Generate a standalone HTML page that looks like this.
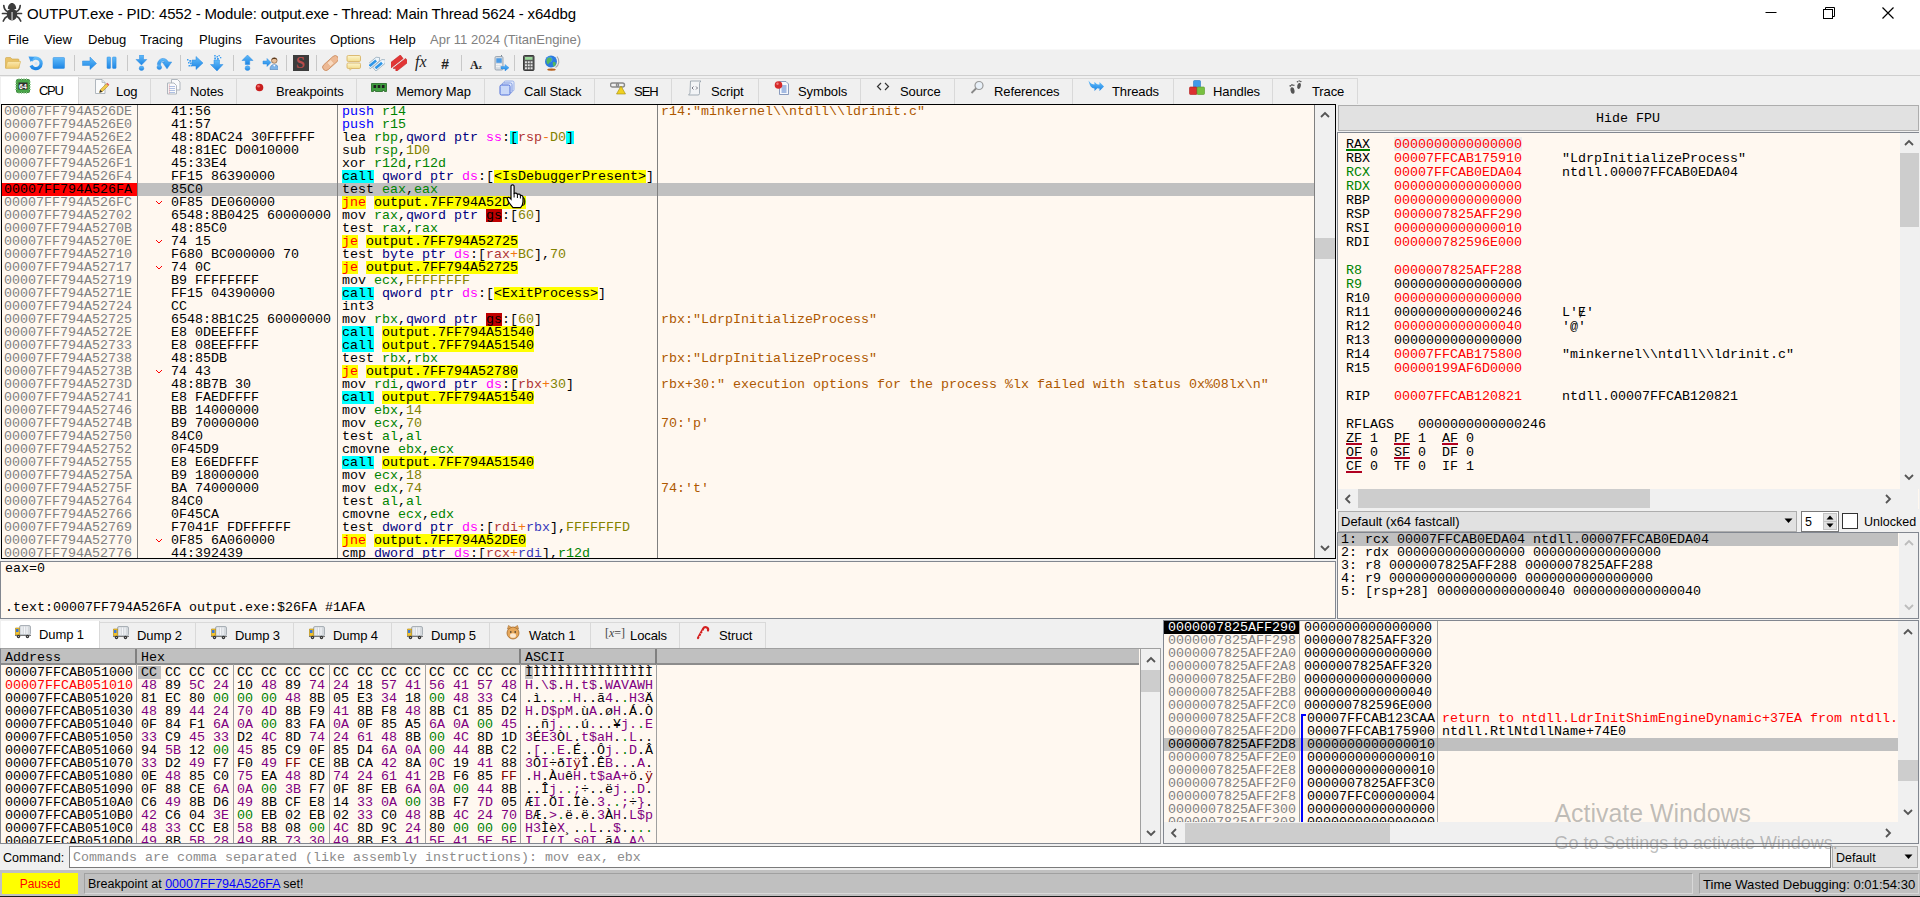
<!DOCTYPE html><html><head><meta charset="utf-8"><title>x64dbg</title><style>*{box-sizing:border-box;margin:0;padding:0}
html,body{width:1920px;height:897px;overflow:hidden;background:#f0f0f0}
body{position:relative;font-family:"Liberation Sans",sans-serif;font-size:13px;color:#000}
.a{position:absolute}
.m{font-family:"Liberation Mono",monospace;font-size:13.33px;line-height:13px;white-space:pre}
.ui{font-family:"Liberation Sans",sans-serif;white-space:pre}
.pan{position:absolute;background:#fff8f0;overflow:hidden}
.row{position:absolute;left:0;height:13px;white-space:pre}
.row i{font-style:normal;position:absolute;top:-0.5px;height:13px}
.row b{font-weight:normal;display:inline-block;height:13px;vertical-align:top}
.g{color:#808080}
.pp{color:#0000ff}.cl{background:#00ffff}.jc{color:#ff0000;background:#ffff00}
.r{color:#008300}.v{color:#828200}.ad{background:#ffff00}
.sz{color:#000080}.sg{color:#ff00ff}.sb{background:#00ffff}
.br{color:#b03434}.ir{color:#3838bc}.op{color:#f27711}.gs{background:#c00000}
.cm{color:#ae5800}
.red{color:#ff0000}.grn{color:#008300}
.p{color:#800080}.z{color:#008000}.f{color:#800000}
.tab{position:absolute;top:78px;height:26px;background:#f0f0f0;border-top:1px solid #d9d9d9;border-right:1px solid #d9d9d9}
.tabt{position:absolute;font-size:13px;line-height:16px;top:84px;white-space:pre;letter-spacing:-0.1px}
.vl{position:absolute;width:1px;background:#808080}
.sb0{position:absolute;background:#f0f0f0}
.th{position:absolute;background:#cdcdcd}
</style></head><body>
<!-- s_top -->
<div class="a" style="left:0;top:0;width:1920px;height:49px;background:#fff"></div><div class="a" style="left:0;top:49px;width:1920px;height:1px;background:#f8f8f8"></div>
<div class="a ui" id="title" style="left:27px;top:4px;font-size:15px;line-height:20px;letter-spacing:-0.17px">OUTPUT.exe - PID: 4552 - Module: output.exe - Thread: Main Thread 5624 - x64dbg</div>
<svg class="a" style="left:0;top:0" width="24" height="24" viewBox="0 0 24 24"><g fill="none" stroke="#3c3c3c" stroke-width="1.700" stroke-linecap="round"><path d="M7.500 11.500C5 10.500 4 8.500 3.800 5.500M16.500 11.500c2.500-1 3.500-3 3.700-6M2.500 13.500h19M7 16.500c-1.800.8-2.800 2.300-3.700 4.500M17 16.500c1.800.8 2.800 2.300 3.700 4.500"/></g><path d="M7.800 9c0-3.500 2-6 4.200-6s4.200 2.500 4.200 6z" fill="#3c3c3c"/><ellipse cx="12" cy="14.500" rx="5.200" ry="6" fill="#3c3c3c"/><rect x="11.400" y="12" width="1.300" height="8" fill="#c8c8c8"/></svg>
<svg class="a" style="left:1750px;top:0" width="170" height="28" viewBox="0 0 170 28"><g stroke="#000" stroke-width="1" fill="none"><path d="M15.500 12.500h11"/><rect x="73.500" y="9.500" width="9" height="9"/><path d="M75.500 9.500v-2h9v9h-2"/><path d="M132.500 7.500l11 11M143.500 7.500l-11 11" stroke-width="1.2"/></g></svg>
<div class="a ui mn" style="left:8px;top:32px;font-size:13px;line-height:16px">File</div>
<div class="a ui mn" style="left:44px;top:32px;font-size:13px;line-height:16px">View</div>
<div class="a ui mn" style="left:88px;top:32px;font-size:13px;line-height:16px">Debug</div>
<div class="a ui mn" style="left:140px;top:32px;font-size:13px;line-height:16px">Tracing</div>
<div class="a ui mn" style="left:199px;top:32px;font-size:13px;line-height:16px">Plugins</div>
<div class="a ui mn" style="left:255px;top:32px;font-size:13px;line-height:16px">Favourites</div>
<div class="a ui mn" style="left:330px;top:32px;font-size:13px;line-height:16px">Options</div>
<div class="a ui mn" style="left:389px;top:32px;font-size:13px;line-height:16px">Help</div>
<div class="a ui" id="build" style="left:430px;top:32px;font-size:13px;line-height:16px;color:#808080">Apr 11 2024 (TitanEngine)</div>
<div class="a" style="left:0;top:50px;width:1920px;height:26px;background:#f0f0f0;border-bottom:1px solid #cfcfcf"></div>
<svg class="a" style="left:0;top:0" width="0" height="0"><defs><linearGradient id="gb" x1="0" y1="0" x2="0" y2="1"><stop offset="0" stop-color="#62bcfa"/><stop offset="1" stop-color="#1c84e4"/></linearGradient><linearGradient id="gf" x1="0" y1="0" x2="0" y2="1"><stop offset="0" stop-color="#fbe9b0"/><stop offset="1" stop-color="#efc96a"/></linearGradient><linearGradient id="gy" x1="0" y1="0" x2="0" y2="1"><stop offset="0" stop-color="#fdf6d0"/><stop offset="1" stop-color="#f2dc8c"/></linearGradient></defs></svg>
<div class="a" style="left:74px;top:55px;width:1px;height:16px;background:#c8c8c8"></div>
<div class="a" style="left:127px;top:55px;width:1px;height:16px;background:#c8c8c8"></div>
<div class="a" style="left:180px;top:55px;width:1px;height:16px;background:#c8c8c8"></div>
<div class="a" style="left:233px;top:55px;width:1px;height:16px;background:#c8c8c8"></div>
<div class="a" style="left:286px;top:55px;width:1px;height:16px;background:#c8c8c8"></div>
<div class="a" style="left:316px;top:55px;width:1px;height:16px;background:#c8c8c8"></div>
<div class="a" style="left:461px;top:55px;width:1px;height:16px;background:#c8c8c8"></div>
<div class="a" style="left:514px;top:55px;width:1px;height:16px;background:#c8c8c8"></div>
<svg class="a" style="left:5px;top:55px" width="16" height="16" viewBox="0 0 16 16"><path d="M0.500 3.500q0-1 1-1h4l1.500 1.500h6q1 0 1 1V13h-13.500z" fill="#e9c267" stroke="#cfa545" stroke-width=".6"/><path d="M0.700 13.300L2.500 6.500h13.200l-2.200 6.800z" fill="url(#gf)" stroke="#d9b356" stroke-width=".6"/></svg>
<svg class="a" style="left:28px;top:55px" width="16" height="16" viewBox="0 0 16 16"><path d="M3.200 5.800A5.300 5.300 0 1 1 3 10.500" fill="none" stroke="url(#gb)" stroke-width="3.200"/><path d="M0.500 1.500l6 .3-3.800 5.200z" fill="#3a9cf0"/><circle cx="8" cy="8.500" r="1.600" fill="#cfe6fb"/></svg>
<svg class="a" style="left:51px;top:55px" width="16" height="16" viewBox="0 0 16 16"><rect x="2" y="2.500" width="11.500" height="11" rx=".8" fill="url(#gb)" stroke="#2b8ae2" stroke-width=".5"/></svg>
<svg class="a" style="left:82px;top:55px" width="16" height="16" viewBox="0 0 16 16"><path d="M0.500 6h7.500V2l6.500 6.500-6.500 6v-4H0.500z" fill="url(#gb)" stroke="#2b8ae2" stroke-width=".5"/></svg>
<svg class="a" style="left:104px;top:55px" width="16" height="16" viewBox="0 0 16 16"><rect x="3" y="2" width="3.600" height="11.500" rx=".8" fill="url(#gb)" stroke="#2b8ae2" stroke-width=".5"/><rect x="8.500" y="2" width="3.600" height="11.500" rx=".8" fill="url(#gb)" stroke="#2b8ae2" stroke-width=".5"/></svg>
<svg class="a" style="left:134px;top:55px" width="16" height="16" viewBox="0 0 16 16"><path d="M5.500 0h4v4.500h3.300L7.500 10 2 4.500h3.500z" fill="url(#gb)" stroke="#2b8ae2" stroke-width=".5"/><circle cx="7.500" cy="13.300" r="2.300" fill="url(#gb)" stroke="#2b8ae2" stroke-width=".5"/></svg>
<svg class="a" style="left:156px;top:55px" width="16" height="16" viewBox="0 0 16 16"><path d="M1.300 9.500C2 3 9 1 12.500 7h3.200l-4.700 6.800L6.300 7h2.500C7 5 4.800 6.500 4.500 9.800z" fill="url(#gb)" stroke="#2b8ae2" stroke-width=".5"/><circle cx="3.300" cy="12.300" r="2.300" fill="url(#gb)" stroke="#2b8ae2" stroke-width=".5"/></svg>
<svg class="a" style="left:187px;top:55px" width="16" height="16" viewBox="0 0 16 16"><path d="M5 5h4V1.500l7 6.500-7 6.500V11H5z" fill="url(#gb)" stroke="#2b8ae2" stroke-width=".5"/><g fill="#3a9cf0"><rect x="0" y="4" width="1.500" height="1.500"/><rect x="2.300" y="5" width="1.800" height="1.800"/><rect x="1" y="7" width="1.500" height="1.500"/><rect x="3" y="7.500" width="1.800" height="1.800"/><rect x="1.500" y="10" width="1.500" height="1.500"/><rect x="3.500" y="10" width="1.500" height="1.500"/></g></svg>
<svg class="a" style="left:209px;top:55px" width="16" height="16" viewBox="0 0 16 16"><path d="M5 5h5.500v4.500h3.500L8 16 1.500 9.500H5z" fill="url(#gb)" stroke="#2b8ae2" stroke-width=".5"/><g fill="#3a9cf0"><rect x="5.200" y="0" width="1.500" height="1.500"/><rect x="7.500" y="1" width="1.500" height="1.500"/><rect x="9.500" y="0" width="1.300" height="1.300"/><rect x="5.200" y="2.500" width="1.800" height="1.800"/><rect x="8" y="3" width="1.800" height="1.800"/><rect x="11" y="2" width="1.300" height="1.300"/></g></svg>
<svg class="a" style="left:240px;top:55px" width="16" height="16" viewBox="0 0 16 16"><path d="M7.500 0l5.500 5.500h-3.300V9.500h-4.400V5.500H2z" fill="url(#gb)" stroke="#2b8ae2" stroke-width=".5"/><circle cx="7.500" cy="13.200" r="2.400" fill="url(#gb)" stroke="#2b8ae2" stroke-width=".5"/></svg>
<svg class="a" style="left:262px;top:55px" width="16" height="16" viewBox="0 0 16 16"><path d="M1 6h4V3.500L9 7.500 5 11.500V9H1z" fill="url(#gb)" stroke="#2b8ae2" stroke-width=".5"/><circle cx="12.300" cy="5.500" r="2.800" fill="#e9c09a" stroke="#6b4a2e" stroke-width=".6"/><path d="M9.400 5a3 3 0 0 1 5.800 0c-1-1.500-4.800-1.500-5.800 0z" fill="#5a3a1e"/><path d="M8 14.500c0-3.500 1.800-5 4.300-5s4.200 1.500 4.200 5z" fill="#7db3e8" stroke="#4a7fb8" stroke-width=".6"/><path d="M11 9.800l1.300 2 1.300-2z" fill="#fff"/></svg>
<div class="a" style="left:293px;top:55px;width:16px;height:16px;background:#3c3c3c"></div><div class="a" style="left:296px;top:54px;font-family:'Liberation Serif',serif;font-size:16px;line-height:17px;font-weight:bold;color:#b84c4c">S</div>
<svg class="a" style="left:322px;top:55px" width="16" height="16" viewBox="0 0 16 16"><g transform="rotate(-42 8.500 8)"><rect x="-1" y="4.800" width="19" height="6.600" rx="3.300" fill="#edb994" stroke="#c98a5e" stroke-width=".8"/><rect x="6" y="5.600" width="5" height="5" fill="#f8d9bf" stroke="#dca37a" stroke-width=".4"/></g></svg>
<svg class="a" style="left:346px;top:55px" width="16" height="16" viewBox="0 0 16 16"><rect x="1" y="0.500" width="13.500" height="6" rx="1.300" fill="url(#gy)" stroke="#d8b468" stroke-width=".9"/><rect x="1" y="8" width="13.500" height="5.500" rx="1.300" fill="url(#gy)" stroke="#d8b468" stroke-width=".9"/><path d="M3.500 13.300l.5 2 2-2z" fill="#f4e096" stroke="#d8b468" stroke-width=".6"/></svg>
<svg class="a" style="left:369px;top:55px" width="16" height="16" viewBox="0 0 16 16"><g transform="rotate(-40 8 8)" stroke="#8fa6b8" stroke-width=".7"><path d="M-1 3h12l2.500 2.500L11 8H-1z" fill="#eef6fc"/><rect x="0.500" y="4.200" width="8.500" height="2.600" fill="#2f96e8" stroke="none"/><path d="M2 8.500h12l2.500 2.500-2.500 2.500H2z" fill="#eef6fc"/><rect x="3.500" y="9.700" width="8.500" height="2.600" fill="#2f96e8" stroke="none"/></g></svg>
<svg class="a" style="left:391px;top:55px" width="16" height="16" viewBox="0 0 16 16"><g transform="rotate(-38 8 8)" fill="#e23636" stroke="#c01c1c" stroke-width=".5"><path d="M-2 2.500h16v4.500H-2l2-2.250z"/><path d="M0 8.500h16V13H0l2-2.250z"/></g></svg>
<div class="a" style="left:415px;top:52px;font-family:'Liberation Serif',serif;font-style:italic;font-size:16px;line-height:20px;color:#222;letter-spacing:0">fx</div>
<div class="a" style="left:441px;top:53.5px;font-family:'Liberation Sans',sans-serif;font-style:italic;font-weight:bold;font-size:14px;line-height:20px;color:#222">#</div>
<div class="a" style="left:470px;top:54.5px;font-family:'Liberation Serif',serif;font-weight:bold;font-size:12px;line-height:20px;color:#222">A<span style="font-size:7px">z</span></div>
<svg class="a" style="left:493px;top:55px" width="16" height="16" viewBox="0 0 16 16"><path d="M8.500 2V0" stroke="#7b8794"/><rect x="2" y="1.500" width="8" height="13.500" rx="1.200" fill="#d5dbe2" stroke="#8b97a4" stroke-width=".8"/><rect x="3.300" y="3.300" width="5.400" height="4.500" fill="#4b9be6"/><g fill="#fff"><rect x="3.300" y="9" width="1.300" height="1.200"/><rect x="5.300" y="9" width="1.300" height="1.200"/><rect x="7.300" y="9" width="1.300" height="1.200"/><rect x="3.300" y="11" width="1.300" height="1.200"/><rect x="5.300" y="11" width="1.300" height="1.200"/></g><path d="M8 11.500h4V9.500l4 3.200-4 3.200v-2H8z" fill="url(#gb)" stroke="#2b8ae2" stroke-width=".4"/></svg>
<svg class="a" style="left:521px;top:55px" width="16" height="16" viewBox="0 0 16 16"><rect x="2.500" y="0.500" width="10.500" height="15" rx="1" fill="#5a5a5a" stroke="#3a3a3a"/><rect x="4" y="2" width="7.500" height="2.800" fill="#9ad89a"/><g fill="#e4e4e4"><rect x="4" y="6.300" width="1.900" height="1.900"/><rect x="6.800" y="6.300" width="1.900" height="1.900"/><rect x="9.600" y="6.300" width="1.900" height="1.900"/><rect x="4" y="9.300" width="1.900" height="1.900"/><rect x="6.800" y="9.300" width="1.900" height="1.900"/><rect x="9.600" y="9.300" width="1.900" height="1.900"/><rect x="4" y="12.300" width="1.900" height="1.900"/><rect x="6.800" y="12.300" width="1.900" height="1.900"/><rect x="9.600" y="12.300" width="1.900" height="1.900"/></g></svg>
<svg class="a" style="left:544px;top:55px" width="16" height="16" viewBox="0 0 16 16"><path d="M13 1.500a7.300 7.300 0 0 1-1.500 11" fill="none" stroke="#aaa" stroke-width="1.100"/><circle cx="7" cy="6.500" r="6" fill="#2a7be0"/><circle cx="5.500" cy="4.500" r="3" fill="#5aa8f4" opacity=".6"/><path d="M3.500 3c2-1.300 4.300-.3 4.200 1.700S5.500 6.500 4.800 8.500 2.300 8 2.500 5.500z M8.800 7.500c1-1 3-.3 3 .9s-.9 3-1.900 3-1.200-2.800-1.100-3.900z" fill="#56b85e"/><ellipse cx="7.500" cy="14.600" rx="4.300" ry="1.200" fill="#b8601c"/></svg>
<div class="a" style="left:1px;top:77px;width:78px;height:27px;background:#fff;border-right:1px solid #d9d9d9"></div>
<div class="tabt" style="left:39px;top:83px;letter-spacing:-1.3px">CPU</div>
<div class="tab" style="left:79px;width:72px"></div>
<div class="tabt" style="left:116px">Log</div>
<div class="tab" style="left:151px;width:86px"></div>
<div class="tabt" style="left:190px">Notes</div>
<div class="tab" style="left:237px;width:120px"></div>
<div class="tabt" style="left:276px">Breakpoints</div>
<div class="tab" style="left:357px;width:128px"></div>
<div class="tabt" style="left:396px">Memory Map</div>
<div class="tab" style="left:485px;width:110px"></div>
<div class="tabt" style="left:524px">Call Stack</div>
<div class="tab" style="left:595px;width:77px"></div>
<div class="tabt" style="left:634px;letter-spacing:-1px">SEH</div>
<div class="tab" style="left:672px;width:87px"></div>
<div class="tabt" style="left:711px">Script</div>
<div class="tab" style="left:759px;width:102px"></div>
<div class="tabt" style="left:798px">Symbols</div>
<div class="tab" style="left:861px;width:94px"></div>
<div class="tabt" style="left:900px">Source</div>
<div class="tab" style="left:955px;width:118px"></div>
<div class="tabt" style="left:994px">References</div>
<div class="tab" style="left:1073px;width:101px"></div>
<div class="tabt" style="left:1112px">Threads</div>
<div class="tab" style="left:1174px;width:99px"></div>
<div class="tabt" style="left:1213px">Handles</div>
<div class="tab" style="left:1273px;width:85px"></div>
<div class="tabt" style="left:1312px">Trace</div>
<svg class="a" style="left:15px;top:78px" width="16" height="16" viewBox="0 0 16 16"><rect x="1.500" y="1.500" width="13" height="13" rx="1" fill="#49a649" stroke="#2f7a2f" stroke-width=".9"/><path d="M4 0v2M6.500 0v2M9 0v2M11.500 0v2M4 14v2M6.500 14v2M9 14v2M11.500 14v2M0 4h2M0 6.500h2M0 9h2M0 11.500h2M14 4h2M14 6.500h2M14 9h2M14 11.500h2" stroke="#8fcf8f" stroke-width=".9"/><rect x="3.500" y="4.500" width="9" height="7" fill="#2e2e2e"/><text x="8" y="10.600" font-family="Liberation Sans,sans-serif" font-size="7" font-weight="bold" fill="#fff" text-anchor="middle">64</text></svg>
<svg class="a" style="left:94px;top:79px" width="16" height="16" viewBox="0 0 16 16"><path d="M1.500 .5h6.500l3 3V14.500H1.500z" fill="#fafbfc" stroke="#a8b0b8" stroke-width=".9"/><path d="M8 .5v3h3" fill="#e4e8ec" stroke="#a8b0b8" stroke-width=".7"/><path d="M5.500 13.500l.8-2.800 6-6 2 2-6 6z" fill="#f2c94c" stroke="#9a7a20" stroke-width=".5"/><path d="M12.300 4.700l1-1 2 2-1 1z" fill="#e05a5a"/><path d="M5.500 13.500l.8-2.800 2 2z" fill="#333"/></svg>
<svg class="a" style="left:166px;top:79px" width="16" height="16" viewBox="0 0 16 16"><path d="M5.500 .5h6l2.500 2.500V11H5.500z" fill="#fafbfc" stroke="#a8b0b8" stroke-width=".9"/><path d="M1.500 4h6.500l2.500 2.500V15H1.500z" fill="#fafbfc" stroke="#a8b0b8" stroke-width=".9"/><path d="M3 7.500h6M3 9.500h6M3 11.500h6M3 13.500h6" stroke="#8ea6d8" stroke-width=".7"/><path d="M3.300 5v10" stroke="#e8a0a0" stroke-width=".6"/></svg>
<svg class="a" style="left:253px;top:80px" width="16" height="16" viewBox="0 0 16 16"><circle cx="6.500" cy="7.500" r="3.800" fill="#c81e1e"/><circle cx="5.500" cy="6.300" r="1.300" fill="#f06a6a"/></svg>
<svg class="a" style="left:371px;top:81px" width="16" height="16" viewBox="0 0 16 16"><path d="M0.500 2.500h15v8h-2v-1h-2v1h-7v-1h-2v1h-2z" fill="#3f9e3f" stroke="#226622" stroke-width=".8"/><rect x="2.500" y="4" width="2.600" height="3" fill="#1e1e1e"/><rect x="6.700" y="4" width="2.600" height="3" fill="#1e1e1e"/><rect x="10.900" y="4" width="2.600" height="3" fill="#1e1e1e"/></svg>
<svg class="a" style="left:499px;top:80px" width="16" height="16" viewBox="0 0 16 16"><rect x="5" y="1" width="10" height="10" rx="1.500" fill="#dfe8fb" stroke="#9ab0e8"/><rect x="3" y="3" width="10" height="10" rx="1.500" fill="#dfe8fb" stroke="#7f98e0"/><rect x="1" y="5" width="10" height="10" rx="1.500" fill="#c9d8f8" stroke="#4f6fd8"/></svg>
<svg class="a" style="left:610px;top:80px" width="16" height="16" viewBox="0 0 16 16"><rect x="0.500" y="3" width="8" height="4" rx="2" fill="none" stroke="#888" stroke-width="1.400"/><rect x="6.500" y="3" width="8" height="4" rx="2" fill="none" stroke="#888" stroke-width="1.400"/><path d="M11 6l4.500 8h-9z" fill="#f0d020" stroke="#a08a10" stroke-width=".6"/></svg>
<svg class="a" style="left:687px;top:80px" width="16" height="16" viewBox="0 0 16 16"><path d="M3.500 1h10.500q-1.500 1-1.500 2.500v10q0 1.500-1.500 1.500H1.500q1.500-1 1.500-2.500z" fill="#f2f4f6" stroke="#98a4ae" stroke-width=".9"/><path d="M6.500 6.500L5 8l1.500 1.500M9 6.500L10.500 8 9 9.500" fill="none" stroke="#556" stroke-width=".8"/></svg>
<svg class="a" style="left:774px;top:80px" width="16" height="16" viewBox="0 0 16 16"><path d="M5.500 1.500h6.500l2.500 2.500v10.500h-9z" fill="#f6f8fc" stroke="#7f92b8" stroke-width=".9"/><path d="M7.500 6h5M7.500 8h5M7.500 10h5M7.500 12h5" stroke="#3f6fc4" stroke-width=".9"/><circle cx="4.500" cy="5" r="3.800" fill="#d62a2a"/><circle cx="3.500" cy="3.800" r="1.200" fill="#f08080"/></svg>
<svg class="a" style="left:876px;top:80px" width="16" height="16" viewBox="0 0 16 16"><path d="M5 3L1.500 6.500 5 10M9 3l3.500 3.500L9 10" fill="none" stroke="#333" stroke-width="1.200"/></svg>
<svg class="a" style="left:970px;top:80px" width="16" height="16" viewBox="0 0 16 16"><circle cx="9" cy="5.500" r="4" fill="#e8f0f8" stroke="#999" stroke-width="1.200"/><path d="M6 8.500L1.500 13" stroke="#888" stroke-width="1.800"/></svg>
<svg class="a" style="left:1088px;top:80px" width="16" height="16" viewBox="0 0 16 16"><path d="M0.500 0.500c2 3 4 4 6 4V2l4.500 4.500-4.500 4.500V8.500c-3 0-5-3-6-8z" fill="url(#gb)"/><path d="M6.500 2c2 2.500 3 2.500 5 2.500V2L16 6.500 11.500 11V8.500c-1.500 0-2.500-.5-3.500-1.500" fill="url(#gb)"/></svg>
<svg class="a" style="left:1189px;top:80px" width="16" height="16" viewBox="0 0 16 16"><rect x="4.500" y="0.500" width="7" height="7" rx="1" fill="#3f9ae8" stroke="#2a78c8" stroke-width=".6"/><rect x="0.500" y="7" width="7.500" height="7.500" rx="1" fill="#dc3030" stroke="#b01c1c" stroke-width=".6"/><rect x="8" y="7" width="7.500" height="7.500" rx="1" fill="#78c040" stroke="#589828" stroke-width=".6"/></svg>
<svg class="a" style="left:1288px;top:80px" width="16" height="16" viewBox="0 0 16 16"><g fill="#555"><ellipse cx="4.500" cy="10.500" rx="2" ry="3.300" transform="rotate(-10 4.500 10.500)"/><circle cx="2.300" cy="5.800" r=".9"/><circle cx="4" cy="5" r=".9"/><circle cx="5.800" cy="5.300" r=".8"/><ellipse cx="11" cy="6" rx="1.800" ry="3" transform="rotate(12 11 6)"/><circle cx="9.500" cy="1.800" r=".8"/><circle cx="11.200" cy="1" r=".8"/><circle cx="12.800" cy="1.500" r=".8"/></g></svg>
<!-- s_disasm -->
<div class="pan" id="dis" style="left:1px;top:104px;width:1335px;height:455px;border:1px solid #000">
<div class="row m" style="top:0px"><i class="g" style="left:2px">00007FF794A526DE</i><i style="left:169px">41:56</i><i style="left:340px"><b class="pp">push</b> <b class="r">r14</b></i><i class="cm" style="left:659px">r14:&quot;minkernel\\ntdll\\ldrinit.c&quot;</i></div>
<div class="row m" style="top:13px"><i class="g" style="left:2px">00007FF794A526E0</i><i style="left:169px">41:57</i><i style="left:340px"><b class="pp">push</b> <b class="r">r15</b></i></div>
<div class="row m" style="top:26px"><i class="g" style="left:2px">00007FF794A526E2</i><i style="left:169px">48:8DAC24 30FFFFFF</i><i style="left:340px">lea <b class="r">rbp</b>,<b class="sz">qword ptr</b> <b class="sg">ss</b>:<b class="sb">[</b><b class="br">rsp</b><b class="op">-</b><b class="v">D0</b><b class="sb">]</b></i></div>
<div class="row m" style="top:39px"><i class="g" style="left:2px">00007FF794A526EA</i><i style="left:169px">48:81EC D0010000</i><i style="left:340px">sub <b class="r">rsp</b>,<b class="v">1D0</b></i></div>
<div class="row m" style="top:52px"><i class="g" style="left:2px">00007FF794A526F1</i><i style="left:169px">45:33E4</i><i style="left:340px">xor <b class="r">r12d</b>,<b class="r">r12d</b></i></div>
<div class="row m" style="top:65px"><i class="g" style="left:2px">00007FF794A526F4</i><i style="left:169px">FF15 86390000</i><i style="left:340px"><b class="cl">call</b> <b class="sz">qword ptr</b> <b class="sg">ds</b>:[<b class="ad">&lt;IsDebuggerPresent&gt;</b>]</i></div>
<div class="a" style="left:0;top:78px;width:135px;height:13px;background:#ff0000"></div>
<div class="a" style="left:136px;top:78px;width:1176px;height:13px;background:#c0c0c0"></div>
<div class="row m" style="top:78px"><i class="" style="left:2px">00007FF794A526FA</i><i style="left:169px">85C0</i><i style="left:340px">test <b class="r">eax</b>,<b class="r">eax</b></i></div>
<div class="row m" style="top:91px"><i class="g" style="left:2px">00007FF794A526FC</i><i style="left:169px">0F85 DE060000</i><i style="left:340px"><b class="jc">jne</b> <b class="ad">output.7FF794A52DE0</b></i></div>
<svg class="a" style="left:153px;top:95px" width="8" height="6" viewBox="0 0 8 6"><path d="M1 1l3 3 3-3" fill="none" stroke="#ff0000" stroke-width="1"/></svg>
<div class="row m" style="top:104px"><i class="g" style="left:2px">00007FF794A52702</i><i style="left:169px">6548:8B0425 60000000</i><i style="left:340px">mov <b class="r">rax</b>,<b class="sz">qword ptr</b> <b class="gs">gs</b>:[<b class="v">60</b>]</i></div>
<div class="row m" style="top:117px"><i class="g" style="left:2px">00007FF794A5270B</i><i style="left:169px">48:85C0</i><i style="left:340px">test <b class="r">rax</b>,<b class="r">rax</b></i></div>
<div class="row m" style="top:130px"><i class="g" style="left:2px">00007FF794A5270E</i><i style="left:169px">74 15</i><i style="left:340px"><b class="jc">je</b> <b class="ad">output.7FF794A52725</b></i></div>
<svg class="a" style="left:153px;top:134px" width="8" height="6" viewBox="0 0 8 6"><path d="M1 1l3 3 3-3" fill="none" stroke="#ff0000" stroke-width="1"/></svg>
<div class="row m" style="top:143px"><i class="g" style="left:2px">00007FF794A52710</i><i style="left:169px">F680 BC000000 70</i><i style="left:340px">test <b class="sz">byte ptr</b> <b class="sg">ds</b>:[<b class="br">rax</b><b class="op">+</b><b class="v">BC</b>],<b class="v">70</b></i></div>
<div class="row m" style="top:156px"><i class="g" style="left:2px">00007FF794A52717</i><i style="left:169px">74 0C</i><i style="left:340px"><b class="jc">je</b> <b class="ad">output.7FF794A52725</b></i></div>
<svg class="a" style="left:153px;top:160px" width="8" height="6" viewBox="0 0 8 6"><path d="M1 1l3 3 3-3" fill="none" stroke="#ff0000" stroke-width="1"/></svg>
<div class="row m" style="top:169px"><i class="g" style="left:2px">00007FF794A52719</i><i style="left:169px">B9 FFFFFFFF</i><i style="left:340px">mov <b class="r">ecx</b>,<b class="v">FFFFFFFF</b></i></div>
<div class="row m" style="top:182px"><i class="g" style="left:2px">00007FF794A5271E</i><i style="left:169px">FF15 04390000</i><i style="left:340px"><b class="cl">call</b> <b class="sz">qword ptr</b> <b class="sg">ds</b>:[<b class="ad">&lt;ExitProcess&gt;</b>]</i></div>
<div class="row m" style="top:195px"><i class="g" style="left:2px">00007FF794A52724</i><i style="left:169px">CC</i><i style="left:340px">int3</i></div>
<div class="row m" style="top:208px"><i class="g" style="left:2px">00007FF794A52725</i><i style="left:169px">6548:8B1C25 60000000</i><i style="left:340px">mov <b class="r">rbx</b>,<b class="sz">qword ptr</b> <b class="gs">gs</b>:[<b class="v">60</b>]</i><i class="cm" style="left:659px">rbx:&quot;LdrpInitializeProcess&quot;</i></div>
<div class="row m" style="top:221px"><i class="g" style="left:2px">00007FF794A5272E</i><i style="left:169px">E8 0DEEFFFF</i><i style="left:340px"><b class="cl">call</b> <b class="ad">output.7FF794A51540</b></i></div>
<div class="row m" style="top:234px"><i class="g" style="left:2px">00007FF794A52733</i><i style="left:169px">E8 08EEFFFF</i><i style="left:340px"><b class="cl">call</b> <b class="ad">output.7FF794A51540</b></i></div>
<div class="row m" style="top:247px"><i class="g" style="left:2px">00007FF794A52738</i><i style="left:169px">48:85DB</i><i style="left:340px">test <b class="r">rbx</b>,<b class="r">rbx</b></i><i class="cm" style="left:659px">rbx:&quot;LdrpInitializeProcess&quot;</i></div>
<div class="row m" style="top:260px"><i class="g" style="left:2px">00007FF794A5273B</i><i style="left:169px">74 43</i><i style="left:340px"><b class="jc">je</b> <b class="ad">output.7FF794A52780</b></i></div>
<svg class="a" style="left:153px;top:264px" width="8" height="6" viewBox="0 0 8 6"><path d="M1 1l3 3 3-3" fill="none" stroke="#ff0000" stroke-width="1"/></svg>
<div class="row m" style="top:273px"><i class="g" style="left:2px">00007FF794A5273D</i><i style="left:169px">48:8B7B 30</i><i style="left:340px">mov <b class="r">rdi</b>,<b class="sz">qword ptr</b> <b class="sg">ds</b>:[<b class="br">rbx</b><b class="op">+</b><b class="v">30</b>]</i><i class="cm" style="left:659px">rbx+30:&quot; execution options for the process %lx failed with status 0x%08lx\n&quot;</i></div>
<div class="row m" style="top:286px"><i class="g" style="left:2px">00007FF794A52741</i><i style="left:169px">E8 FAEDFFFF</i><i style="left:340px"><b class="cl">call</b> <b class="ad">output.7FF794A51540</b></i></div>
<div class="row m" style="top:299px"><i class="g" style="left:2px">00007FF794A52746</i><i style="left:169px">BB 14000000</i><i style="left:340px">mov <b class="r">ebx</b>,<b class="v">14</b></i></div>
<div class="row m" style="top:312px"><i class="g" style="left:2px">00007FF794A5274B</i><i style="left:169px">B9 70000000</i><i style="left:340px">mov <b class="r">ecx</b>,<b class="v">70</b></i><i class="cm" style="left:659px">70:&#x27;p&#x27;</i></div>
<div class="row m" style="top:325px"><i class="g" style="left:2px">00007FF794A52750</i><i style="left:169px">84C0</i><i style="left:340px">test <b class="r">al</b>,<b class="r">al</b></i></div>
<div class="row m" style="top:338px"><i class="g" style="left:2px">00007FF794A52752</i><i style="left:169px">0F45D9</i><i style="left:340px">cmovne <b class="r">ebx</b>,<b class="r">ecx</b></i></div>
<div class="row m" style="top:351px"><i class="g" style="left:2px">00007FF794A52755</i><i style="left:169px">E8 E6EDFFFF</i><i style="left:340px"><b class="cl">call</b> <b class="ad">output.7FF794A51540</b></i></div>
<div class="row m" style="top:364px"><i class="g" style="left:2px">00007FF794A5275A</i><i style="left:169px">B9 18000000</i><i style="left:340px">mov <b class="r">ecx</b>,<b class="v">18</b></i></div>
<div class="row m" style="top:377px"><i class="g" style="left:2px">00007FF794A5275F</i><i style="left:169px">BA 74000000</i><i style="left:340px">mov <b class="r">edx</b>,<b class="v">74</b></i><i class="cm" style="left:659px">74:&#x27;t&#x27;</i></div>
<div class="row m" style="top:390px"><i class="g" style="left:2px">00007FF794A52764</i><i style="left:169px">84C0</i><i style="left:340px">test <b class="r">al</b>,<b class="r">al</b></i></div>
<div class="row m" style="top:403px"><i class="g" style="left:2px">00007FF794A52766</i><i style="left:169px">0F45CA</i><i style="left:340px">cmovne <b class="r">ecx</b>,<b class="r">edx</b></i></div>
<div class="row m" style="top:416px"><i class="g" style="left:2px">00007FF794A52769</i><i style="left:169px">F7041F FDFFFFFF</i><i style="left:340px">test <b class="sz">dword ptr</b> <b class="sg">ds</b>:[<b class="br">rdi</b><b class="op">+</b><b class="ir">rbx</b>],<b class="v">FFFFFFFD</b></i></div>
<div class="row m" style="top:429px"><i class="g" style="left:2px">00007FF794A52770</i><i style="left:169px">0F85 6A060000</i><i style="left:340px"><b class="jc">jne</b> <b class="ad">output.7FF794A52DE0</b></i></div>
<svg class="a" style="left:153px;top:433px" width="8" height="6" viewBox="0 0 8 6"><path d="M1 1l3 3 3-3" fill="none" stroke="#ff0000" stroke-width="1"/></svg>
<div class="row m" style="top:442px"><i class="g" style="left:2px">00007FF794A52776</i><i style="left:169px">44:392439</i><i style="left:340px">cmp <b class="sz">dword ptr</b> <b class="sg">ds</b>:[<b class="br">rcx</b><b class="op">+</b><b class="ir">rdi</b>],<b class="r">r12d</b></i></div>
<div class="vl" style="left:135px;top:0;height:453px"></div>
<div class="vl" style="left:335px;top:0;height:453px"></div>
<div class="vl" style="left:655px;top:0;height:453px"></div>
<div class="sb0" style="left:1312px;top:0;width:21px;height:453px;border-left:1px solid #808080"></div>
<svg class="a" style="left:1318px;top:6px" width="10" height="8" viewBox="0 0 10 8"><path d="M1 6l4-4 4 4" fill="none" stroke="#555" stroke-width="1.800"/></svg>
<svg class="a" style="left:1318px;top:439px" width="10" height="8" viewBox="0 0 10 8"><path d="M1 2l4 4 4-4" fill="none" stroke="#555" stroke-width="1.800"/></svg>
<div class="th" style="left:1313px;top:133px;width:20px;height:21px"></div>
</div>
<svg class="a" style="left:506px;top:184px" width="19" height="25" viewBox="0 0 19 25"><path d="M5.500 1.200c1.200-.8 2.600 0 2.600 1.300v7l1.200-.3c1-.2 1.900.3 2.100 1.100l1-.2c1-.2 1.900.4 2 1.300l.8-.1c1.100 0 1.800.8 1.800 1.900v4.500c0 2.500-1.200 4.500-2.400 6H7c-2.500-3-5-6-5.600-8.700-.4-1.300 1-2.300 2.200-1.300l1.400 1.500V2.500c0-.5.200-1 .5-1.300z" fill="#fff" stroke="#000" stroke-width="1.200"/><path d="M8.100 9.500v4M11.400 10.500v3.500M14.400 11.500v3" stroke="#000" stroke-width="1"/></svg>
<div class="pan" id="info" style="left:0;top:561px;width:1336px;height:58px;border:1px solid #828790">
<div class="row m" style="top:0"><i style="left:4px">eax=0</i></div>
<div class="row m" style="top:39px"><i style="left:4px">.text:00007FF794A526FA output.exe:$26FA #1AFA</i></div>
</div>
<!-- s_regs -->
<div class="a" style="left:1338px;top:105px;width:581px;height:26px;background:#e1e1e1;border:1px solid #adadad"></div>
<div class="a m" style="left:1596px;top:111.500px">Hide FPU</div>
<div class="pan" id="regs" style="left:1337px;top:132px;width:582px;height:377px;border-left:1px solid #828790;border-top:1px solid #828790">
<div class="a" style="left:56px;top:4px;width:128px;height:14px;background:#eeeeee"></div>
<div class="a" style="left:8px;top:16px;width:24px;height:2px;background:#008000"></div>
<div class="row m" style="top:4px"><i class="" style="left:8px;top:1px">RAX</i><i class="red" style="left:56px;top:1px">0000000000000000</i></div>
<div class="row m" style="top:18px"><i class="" style="left:8px;top:1px">RBX</i><i class="red" style="left:56px;top:1px">00007FFCAB175910</i><i style="left:224px;top:1px">&quot;LdrpInitializeProcess&quot;</i></div>
<div class="row m" style="top:32px"><i class="grn" style="left:8px;top:1px">RCX</i><i class="red" style="left:56px;top:1px">00007FFCAB0EDA04</i><i style="left:224px;top:1px">ntdll.00007FFCAB0EDA04</i></div>
<div class="row m" style="top:46px"><i class="grn" style="left:8px;top:1px">RDX</i><i class="red" style="left:56px;top:1px">0000000000000000</i></div>
<div class="row m" style="top:60px"><i class="" style="left:8px;top:1px">RBP</i><i class="red" style="left:56px;top:1px">0000000000000000</i></div>
<div class="row m" style="top:74px"><i class="" style="left:8px;top:1px">RSP</i><i class="red" style="left:56px;top:1px">0000007825AFF290</i></div>
<div class="row m" style="top:88px"><i class="" style="left:8px;top:1px">RSI</i><i class="red" style="left:56px;top:1px">0000000000000010</i></div>
<div class="row m" style="top:102px"><i class="" style="left:8px;top:1px">RDI</i><i class="red" style="left:56px;top:1px">000000782596E000</i></div>
<div class="row m" style="top:130px"><i class="grn" style="left:8px;top:1px">R8</i><i class="red" style="left:56px;top:1px">0000007825AFF288</i></div>
<div class="row m" style="top:144px"><i class="grn" style="left:8px;top:1px">R9</i><i class="" style="left:56px;top:1px">0000000000000000</i></div>
<div class="row m" style="top:158px"><i class="" style="left:8px;top:1px">R10</i><i class="red" style="left:56px;top:1px">0000000000000000</i></div>
<div class="row m" style="top:172px"><i class="" style="left:8px;top:1px">R11</i><i class="" style="left:56px;top:1px">0000000000000246</i><i style="left:224px;top:1px">L&#x27;Ɇ&#x27;</i></div>
<div class="row m" style="top:186px"><i class="" style="left:8px;top:1px">R12</i><i class="red" style="left:56px;top:1px">0000000000000040</i><i style="left:224px;top:1px">&#x27;@&#x27;</i></div>
<div class="row m" style="top:200px"><i class="" style="left:8px;top:1px">R13</i><i class="" style="left:56px;top:1px">0000000000000000</i></div>
<div class="row m" style="top:214px"><i class="" style="left:8px;top:1px">R14</i><i class="red" style="left:56px;top:1px">00007FFCAB175800</i><i style="left:224px;top:1px">&quot;minkernel\\ntdll\\ldrinit.c&quot;</i></div>
<div class="row m" style="top:228px"><i class="" style="left:8px;top:1px">R15</i><i class="red" style="left:56px;top:1px">00000199AF6D0000</i></div>
<div class="row m" style="top:256px"><i class="" style="left:8px;top:1px">RIP</i><i class="red" style="left:56px;top:1px">00007FFCAB120821</i><i style="left:224px;top:1px">ntdll.00007FFCAB120821</i></div>
<div class="row m" style="top:284px"><i style="left:8px;top:1px">RFLAGS</i><i style="left:80px;top:1px">0000000000000246</i></div>
<div class="a" style="left:8px;top:310px;width:16px;height:2px;background:#b00020"></div>
<div class="a" style="left:56px;top:310px;width:16px;height:2px;background:#b00020"></div>
<div class="a" style="left:104px;top:310px;width:16px;height:2px;background:#b00020"></div>
<div class="row m" style="top:298px"><i style="left:8px;top:1px">ZF</i><i style="left:32px;top:1px">1</i><i style="left:56px;top:1px">PF</i><i style="left:80px;top:1px">1</i><i style="left:104px;top:1px">AF</i><i style="left:128px;top:1px">0</i></div>
<div class="a" style="left:8px;top:324px;width:16px;height:2px;background:#b00020"></div>
<div class="a" style="left:56px;top:324px;width:16px;height:2px;background:#b00020"></div>
<div class="row m" style="top:312px"><i style="left:8px;top:1px">OF</i><i style="left:32px;top:1px">0</i><i style="left:56px;top:1px">SF</i><i style="left:80px;top:1px">0</i><i style="left:104px;top:1px">DF</i><i style="left:128px;top:1px">0</i></div>
<div class="a" style="left:8px;top:338px;width:16px;height:2px;background:#b00020"></div>
<div class="row m" style="top:326px"><i style="left:8px;top:1px">CF</i><i style="left:32px;top:1px">0</i><i style="left:56px;top:1px">TF</i><i style="left:80px;top:1px">0</i><i style="left:104px;top:1px">IF</i><i style="left:128px;top:1px">1</i></div>
<div class="sb0" style="left:562px;top:0;width:19px;height:356px"></div>
<svg class="a" style="left:566px;top:6px" width="10" height="8" viewBox="0 0 10 8"><path d="M1 6l4-4 4 4" fill="none" stroke="#555" stroke-width="1.800"/></svg>
<svg class="a" style="left:566px;top:340px" width="10" height="8" viewBox="0 0 10 8"><path d="M1 2l4 4 4-4" fill="none" stroke="#555" stroke-width="1.800"/></svg>
<div class="th" style="left:562px;top:20px;width:19px;height:74px"></div>
<div class="sb0" style="left:0;top:356px;width:580px;height:20px"></div>
<svg class="a" style="left:6px;top:361px" width="8" height="10" viewBox="0 0 8 10"><path d="M6 1L2 5l4 4" fill="none" stroke="#555" stroke-width="1.800"/></svg>
<svg class="a" style="left:546px;top:361px" width="8" height="10" viewBox="0 0 8 10"><path d="M2 1l4 4-4 4" fill="none" stroke="#555" stroke-width="1.800"/></svg>
<div class="th" style="left:20px;top:356px;width:292px;height:19px"></div>
</div>
<div class="a" style="left:1338px;top:511px;width:459px;height:21px;background:#e1e1e1;border:1px solid #adadad"></div>
<div class="a ui" id="cc" style="left:1341px;top:514px;font-size:13px;line-height:15px">Default (x64 fastcall)</div>
<svg class="a" style="left:1784px;top:518px" width="9" height="6" viewBox="0 0 9 6"><path d="M0.500 0.500h8L4.500 5z" fill="#000"/></svg>
<div class="a" style="left:1801px;top:511px;width:38px;height:21px;background:#fff;border:1px solid #7a7a7a"></div>
<div class="a ui" style="left:1805px;top:515px;font-size:12.500px;line-height:15px">5</div>
<div class="a" style="left:1823px;top:513px;width:14px;height:17px;background:#e1e1e1;border:1px solid #c4c4c4"></div>
<div class="a" style="left:1824px;top:521px;width:12px;height:1px;background:#c4c4c4"></div>
<svg class="a" style="left:1825px;top:513px" width="10" height="17" viewBox="0 0 10 17"><path d="M1.500 6.500l3.500-4 3.500 4zM1.500 10.500l3.500 4 3.500-4z" fill="#000"/></svg>
<div class="a" style="left:1842px;top:513px;width:16px;height:16px;background:#fff;border:1px solid #333"></div>
<div class="a ui" id="unl" style="left:1864px;top:515px;font-size:12.500px;line-height:15px">Unlocked</div>
<div class="pan" id="args" style="left:1337px;top:532px;width:582px;height:87px;border:1px solid #828790">
<div class="a" style="left:0;top:0;width:560px;height:13px;background:#c0c0c0"></div>
<div class="row m" style="top:0px"><i style="left:3px">1: rcx 00007FFCAB0EDA04 ntdll.00007FFCAB0EDA04</i></div>
<div class="row m" style="top:13px"><i style="left:3px">2: rdx 0000000000000000 0000000000000000</i></div>
<div class="row m" style="top:26px"><i style="left:3px">3: r8 0000007825AFF288 0000007825AFF288</i></div>
<div class="row m" style="top:39px"><i style="left:3px">4: r9 0000000000000000 0000000000000000</i></div>
<div class="row m" style="top:52px"><i style="left:3px">5: [rsp+28] 0000000000000040 0000000000000040</i></div>
<div class="sb0" style="left:561px;top:0;width:19px;height:85px"></div>
<svg class="a" style="left:566px;top:6px" width="10" height="8" viewBox="0 0 10 8"><path d="M1 6l4-4 4 4" fill="none" stroke="#bcbcbc" stroke-width="1.800"/></svg>
<svg class="a" style="left:566px;top:70px" width="10" height="8" viewBox="0 0 10 8"><path d="M1 2l4 4 4-4" fill="none" stroke="#bcbcbc" stroke-width="1.800"/></svg>
</div>
<!-- s_dump -->
<div class="a" style="left:1px;top:621px;width:99px;height:28px;background:#fff;border-right:1px solid #d9d9d9"></div>
<div class="tabt" style="left:39px;top:626.5px">Dump 1</div>
<svg class="a" style="left:15px;top:625px" width="16" height="16" viewBox="0 0 16 16"><rect x="4.500" y="0.500" width="11" height="9.500" rx="1.500" fill="#d5d9dd" stroke="#9aa2aa" stroke-width=".8"/><path d="M7 1.500v7.500M9.500 1.500v7.500M12 1.500v7.500" stroke="#f4f6f8" stroke-width="1.200"/><path d="M0.500 3h4v7h-4z" fill="#f2c230" stroke="#b8901c" stroke-width=".7"/><rect x="1" y="4" width="2.500" height="3" fill="#3b78d8"/><path d="M0 10.500h16" stroke="#777" stroke-width="1"/><circle cx="3.500" cy="11.500" r="1.700" fill="#333"/><circle cx="12.500" cy="11.500" r="1.700" fill="#333"/><circle cx="3.500" cy="11.500" r=".6" fill="#ccc"/><circle cx="12.500" cy="11.500" r=".6" fill="#ccc"/></svg>
<div class="tab" style="left:100px;top:622px;width:96px;height:26px"></div>
<div class="tabt" style="left:137px;top:627.5px">Dump 2</div>
<svg class="a" style="left:113px;top:626px" width="16" height="16" viewBox="0 0 16 16"><rect x="4.500" y="0.500" width="11" height="9.500" rx="1.500" fill="#d5d9dd" stroke="#9aa2aa" stroke-width=".8"/><path d="M7 1.500v7.500M9.500 1.500v7.500M12 1.500v7.500" stroke="#f4f6f8" stroke-width="1.200"/><path d="M0.500 3h4v7h-4z" fill="#f2c230" stroke="#b8901c" stroke-width=".7"/><rect x="1" y="4" width="2.500" height="3" fill="#3b78d8"/><path d="M0 10.500h16" stroke="#777" stroke-width="1"/><circle cx="3.500" cy="11.500" r="1.700" fill="#333"/><circle cx="12.500" cy="11.500" r="1.700" fill="#333"/><circle cx="3.500" cy="11.500" r=".6" fill="#ccc"/><circle cx="12.500" cy="11.500" r=".6" fill="#ccc"/></svg>
<div class="tab" style="left:196px;top:622px;width:98px;height:26px"></div>
<div class="tabt" style="left:235px;top:627.5px">Dump 3</div>
<svg class="a" style="left:211px;top:626px" width="16" height="16" viewBox="0 0 16 16"><rect x="4.500" y="0.500" width="11" height="9.500" rx="1.500" fill="#d5d9dd" stroke="#9aa2aa" stroke-width=".8"/><path d="M7 1.500v7.500M9.500 1.500v7.500M12 1.500v7.500" stroke="#f4f6f8" stroke-width="1.200"/><path d="M0.500 3h4v7h-4z" fill="#f2c230" stroke="#b8901c" stroke-width=".7"/><rect x="1" y="4" width="2.500" height="3" fill="#3b78d8"/><path d="M0 10.500h16" stroke="#777" stroke-width="1"/><circle cx="3.500" cy="11.500" r="1.700" fill="#333"/><circle cx="12.500" cy="11.500" r="1.700" fill="#333"/><circle cx="3.500" cy="11.500" r=".6" fill="#ccc"/><circle cx="12.500" cy="11.500" r=".6" fill="#ccc"/></svg>
<div class="tab" style="left:294px;top:622px;width:98px;height:26px"></div>
<div class="tabt" style="left:333px;top:627.5px">Dump 4</div>
<svg class="a" style="left:309px;top:626px" width="16" height="16" viewBox="0 0 16 16"><rect x="4.500" y="0.500" width="11" height="9.500" rx="1.500" fill="#d5d9dd" stroke="#9aa2aa" stroke-width=".8"/><path d="M7 1.500v7.500M9.500 1.500v7.500M12 1.500v7.500" stroke="#f4f6f8" stroke-width="1.200"/><path d="M0.500 3h4v7h-4z" fill="#f2c230" stroke="#b8901c" stroke-width=".7"/><rect x="1" y="4" width="2.500" height="3" fill="#3b78d8"/><path d="M0 10.500h16" stroke="#777" stroke-width="1"/><circle cx="3.500" cy="11.500" r="1.700" fill="#333"/><circle cx="12.500" cy="11.500" r="1.700" fill="#333"/><circle cx="3.500" cy="11.500" r=".6" fill="#ccc"/><circle cx="12.500" cy="11.500" r=".6" fill="#ccc"/></svg>
<div class="tab" style="left:392px;top:622px;width:98px;height:26px"></div>
<div class="tabt" style="left:431px;top:627.5px">Dump 5</div>
<svg class="a" style="left:407px;top:626px" width="16" height="16" viewBox="0 0 16 16"><rect x="4.500" y="0.500" width="11" height="9.500" rx="1.500" fill="#d5d9dd" stroke="#9aa2aa" stroke-width=".8"/><path d="M7 1.500v7.500M9.500 1.500v7.500M12 1.500v7.500" stroke="#f4f6f8" stroke-width="1.200"/><path d="M0.500 3h4v7h-4z" fill="#f2c230" stroke="#b8901c" stroke-width=".7"/><rect x="1" y="4" width="2.500" height="3" fill="#3b78d8"/><path d="M0 10.500h16" stroke="#777" stroke-width="1"/><circle cx="3.500" cy="11.500" r="1.700" fill="#333"/><circle cx="12.500" cy="11.500" r="1.700" fill="#333"/><circle cx="3.500" cy="11.500" r=".6" fill="#ccc"/><circle cx="12.500" cy="11.500" r=".6" fill="#ccc"/></svg>
<div class="tab" style="left:490px;top:622px;width:101px;height:26px"></div>
<div class="tabt" style="left:529px;top:627.5px">Watch 1</div>
<div class="tab" style="left:591px;top:622px;width:89px;height:26px"></div>
<div class="tabt" style="left:630px;top:627.5px">Locals</div>
<div class="tab" style="left:680px;top:622px;width:86px;height:26px"></div>
<div class="tabt" style="left:719px;top:627.5px">Struct</div>
<svg class="a" style="left:505px;top:625px" width="16" height="16" viewBox="0 0 16 16"><circle cx="8" cy="8" r="6" fill="#e6a75a" stroke="#a56a2a" stroke-width=".8"/><path d="M2.500 4l1-3.500 3 2zM13.500 4l-1-3.500-3 2z" fill="#e6a75a" stroke="#a56a2a" stroke-width=".6"/><ellipse cx="8" cy="10.500" rx="3" ry="2.300" fill="#fbe8d0"/><circle cx="5.800" cy="7" r=".8" fill="#222"/><circle cx="10.200" cy="7" r=".8" fill="#222"/></svg>
<div class="a" style="left:605px;top:627px;font-family:'Liberation Serif',serif;font-size:12px;line-height:12px;color:#444;white-space:pre">[<span style="font-style:italic">x</span>=]</div>
<svg class="a" style="left:695px;top:625px" width="16" height="16" viewBox="0 0 16 16"><path d="M3 13L8 4a2.500 2.500 0 0 1 5 1.500" fill="none" stroke="#d42020" stroke-width="2.200" stroke-linecap="round"/><path d="M4 11.500l2 1M5.500 8.500l2 1M7 6l2 1" stroke="#fff" stroke-width=".9"/></svg>
<div class="pan" id="dump" style="left:0;top:648px;width:1161px;height:196px;border-left:1px solid #828790;border-bottom:1px solid #828790;border-top:1px solid #a0a0a0;border-right:1px solid #a0a0a0">
<div class="a" style="left:0;top:0;width:1138px;height:16px;background:#c0c0c0;border-bottom:2px solid #8c8c8c"></div>
<div class="a" style="left:134px;top:0;width:2px;height:16px;background:#808080"></div>
<div class="a" style="left:518px;top:0;width:2px;height:16px;background:#808080"></div>
<div class="a" style="left:654px;top:0;width:2px;height:16px;background:#808080"></div>
<div class="row m" style="top:2.5px"><i style="left:4px">Address</i><i style="left:140px">Hex</i><i style="left:524px">ASCII</i></div>
<div class="vl" style="left:135px;top:15px;height:180px;background:#a0a0a0"></div>
<div class="vl" style="left:232px;top:15px;height:180px;background:#a0a0a0"></div>
<div class="vl" style="left:328px;top:15px;height:180px;background:#a0a0a0"></div>
<div class="vl" style="left:424px;top:15px;height:180px;background:#a0a0a0"></div>
<div class="vl" style="left:519px;top:15px;height:180px;background:#a0a0a0"></div>
<div class="vl" style="left:655px;top:15px;height:180px;background:#a0a0a0"></div>
<div class="a" style="left:137px;top:17px;width:23px;height:13px;background:#c0c0c0"></div>
<div class="a" style="left:524px;top:17px;width:8px;height:13px;background:#c0c0c0"></div>
<div class="row m" style="top:17px"><i class="" style="left:4px">00007FFCAB051000</i><i style="left:140px">CC CC CC CC CC CC CC CC CC CC CC CC CC CC CC CC </i><i style="left:524px">ÌÌÌÌÌÌÌÌÌÌÌÌÌÌÌÌ</i></div>
<div class="row m" style="top:30px"><i class="red" style="left:4px">00007FFCAB051010</i><i style="left:140px"><b class="p">48 </b>89 <b class="p">5C 24 </b>10 <b class="p">48 </b>89 <b class="p">74 24 </b>18 <b class="p">57 41 56 41 57 48 </b></i><i style="left:524px"><b class="p">H</b>.<b class="p">\$</b>.<b class="p">H</b>.<b class="p">t$</b>.<b class="p">WAVAWH</b></i></div>
<div class="row m" style="top:43px"><i class="" style="left:4px">00007FFCAB051020</i><i style="left:140px">81 EC 80 <b class="z">00 00 00 </b><b class="p">48 </b>8B 05 E3 <b class="p">34 </b>18 <b class="z">00 </b><b class="p">48 33 </b>C4 </i><i style="left:524px">.ì.<b class="z">...</b><b class="p">H</b>..ã<b class="p">4</b>.<b class="z">.</b><b class="p">H3</b>Ä</i></div>
<div class="row m" style="top:56px"><i class="" style="left:4px">00007FFCAB051030</i><i style="left:140px"><b class="p">48 </b>89 <b class="p">44 24 70 4D </b>8B F9 <b class="p">41 </b>8B F8 <b class="p">48 </b>8B C1 85 D2 </i><i style="left:524px"><b class="p">H</b>.<b class="p">D$pM</b>.ù<b class="p">A</b>.ø<b class="p">H</b>.Á.Ò</i></div>
<div class="row m" style="top:69px"><i class="" style="left:4px">00007FFCAB051040</i><i style="left:140px">0F 84 F1 <b class="p">6A 0A </b><b class="z">00 </b>83 FA <b class="p">0A </b>0F 85 A5 <b class="p">6A 0A </b><b class="z">00 </b><b class="p">45 </b></i><i style="left:524px">..ñ<b class="p">j.</b><b class="z">.</b>.ú<b class="p">.</b>..¥<b class="p">j.</b><b class="z">.</b><b class="p">E</b></i></div>
<div class="row m" style="top:82px"><i class="" style="left:4px">00007FFCAB051050</i><i style="left:140px"><b class="p">33 </b>C9 <b class="p">45 33 </b>D2 <b class="p">4C </b>8D <b class="p">74 24 61 48 </b>8B <b class="z">00 </b><b class="p">4C </b>8D 1D </i><i style="left:524px"><b class="p">3</b>É<b class="p">E3</b>Ò<b class="p">L</b>.<b class="p">t$aH</b>.<b class="z">.</b><b class="p">L</b>..</i></div>
<div class="row m" style="top:95px"><i class="" style="left:4px">00007FFCAB051060</i><i style="left:140px">94 <b class="p">5B </b>12 <b class="z">00 </b><b class="p">45 </b>85 C9 0F 85 D4 <b class="p">6A 0A </b><b class="z">00 </b><b class="p">44 </b>8B C2 </i><i style="left:524px">.<b class="p">[</b>.<b class="z">.</b><b class="p">E</b>.É..Ô<b class="p">j.</b><b class="z">.</b><b class="p">D</b>.Â</i></div>
<div class="row m" style="top:108px"><i class="" style="left:4px">00007FFCAB051070</i><i style="left:140px"><b class="p">33 </b>D2 <b class="p">49 </b>F7 F0 <b class="p">49 </b><b class="f">FF </b>CE 8B CA <b class="p">42 </b>8A <b class="p">0C </b>19 <b class="p">41 </b>88 </i><i style="left:524px"><b class="p">3</b>Ò<b class="p">I</b>÷ð<b class="p">I</b><b class="f">ÿ</b>Î.Ê<b class="p">B</b>.<b class="p">.</b>.<b class="p">A</b>.</i></div>
<div class="row m" style="top:121px"><i class="" style="left:4px">00007FFCAB051080</i><i style="left:140px">0E <b class="p">48 </b>85 C0 <b class="p">75 </b>EA <b class="p">48 </b>8D <b class="p">74 24 61 41 2B </b>F6 85 <b class="f">FF </b></i><i style="left:524px">.<b class="p">H</b>.À<b class="p">u</b>ê<b class="p">H</b>.<b class="p">t$aA+</b>ö.<b class="f">ÿ</b></i></div>
<div class="row m" style="top:134px"><i class="" style="left:4px">00007FFCAB051090</i><i style="left:140px">0F 88 CE <b class="p">6A 0A </b><b class="z">00 </b><b class="p">3B </b>F7 0F 8F EB <b class="p">6A 0A </b><b class="z">00 </b><b class="p">44 </b>8B </i><i style="left:524px">..Î<b class="p">j.</b><b class="z">.</b><b class="p">;</b>÷..ë<b class="p">j.</b><b class="z">.</b><b class="p">D</b>.</i></div>
<div class="row m" style="top:147px"><i class="" style="left:4px">00007FFCAB0510A0</i><i style="left:140px">C6 <b class="p">49 </b>8B D6 <b class="p">49 </b>8B CF E8 14 <b class="p">33 0A </b><b class="z">00 </b><b class="p">3B </b>F7 <b class="p">7D </b>05 </i><i style="left:524px">Æ<b class="p">I</b>.Ö<b class="p">I</b>.Ïè.<b class="p">3.</b><b class="z">.</b><b class="p">;</b>÷<b class="p">}</b>.</i></div>
<div class="row m" style="top:160px"><i class="" style="left:4px">00007FFCAB0510B0</i><i style="left:140px"><b class="p">42 </b>C6 04 <b class="p">3E </b><b class="z">00 </b>EB 02 EB 02 <b class="p">33 </b>C0 <b class="p">48 </b>8B <b class="p">4C 24 70 </b></i><i style="left:524px"><b class="p">B</b>Æ.<b class="p">&gt;</b><b class="z">.</b>ë.ë.<b class="p">3</b>À<b class="p">H</b>.<b class="p">L$p</b></i></div>
<div class="row m" style="top:173px"><i class="" style="left:4px">00007FFCAB0510C0</i><i style="left:140px"><b class="p">48 33 </b>CC E8 <b class="p">58 </b>B8 08 <b class="z">00 </b><b class="p">4C </b>8D 9C <b class="p">24 </b>80 <b class="z">00 00 00 </b></i><i style="left:524px"><b class="p">H3</b>Ìè<b class="p">X</b>¸.<b class="z">.</b><b class="p">L</b>..<b class="p">$</b>.<b class="z">...</b></i></div>
<div class="row m" style="top:186px"><i class="" style="left:4px">00007FFCAB0510D0</i><i style="left:140px"><b class="p">49 </b>8B <b class="p">5B 28 49 </b>8B <b class="p">73 30 49 </b>8B E3 <b class="p">41 5F 41 5E 5F </b></i><i style="left:524px"><b class="p">I</b>.<b class="p">[(I</b>.<b class="p">s0I</b>.ã<b class="p">A_A^_</b></i></div>
<div class="sb0" style="left:1139px;top:0;width:21px;height:195px;border-left:1px solid #a0a0a0"></div>
<svg class="a" style="left:1145px;top:7px" width="10" height="8" viewBox="0 0 10 8"><path d="M1 6l4-4 4 4" fill="none" stroke="#555" stroke-width="1.800"/></svg>
<svg class="a" style="left:1145px;top:180px" width="10" height="8" viewBox="0 0 10 8"><path d="M1 2l4 4 4-4" fill="none" stroke="#555" stroke-width="1.800"/></svg>
<div class="th" style="left:1140px;top:21px;width:20px;height:22px"></div>
</div>
<!-- s_stack -->
<div class="pan" id="stack" style="left:1163px;top:620px;width:756px;height:224px;border:1px solid #828790">
<div class="a" style="left:0;top:0;width:135px;height:13px;background:#000"></div>
<div class="row m" style="top:0px"><i class="" style="color:#fff;left:4px">0000007825AFF290</i><i style="left:140px">0000000000000000</i></div>
<div class="row m" style="top:13px"><i class="g" style="left:4px">0000007825AFF298</i><i style="left:140px">0000007825AFF320</i></div>
<div class="row m" style="top:26px"><i class="g" style="left:4px">0000007825AFF2A0</i><i style="left:140px">0000000000000000</i></div>
<div class="row m" style="top:39px"><i class="g" style="left:4px">0000007825AFF2A8</i><i style="left:140px">0000007825AFF320</i></div>
<div class="row m" style="top:52px"><i class="g" style="left:4px">0000007825AFF2B0</i><i style="left:140px">0000000000000000</i></div>
<div class="row m" style="top:65px"><i class="g" style="left:4px">0000007825AFF2B8</i><i style="left:140px">0000000000000040</i></div>
<div class="row m" style="top:78px"><i class="g" style="left:4px">0000007825AFF2C0</i><i style="left:140px">000000782596E000</i></div>
<div class="row m" style="top:91px"><i class="g" style="left:4px">0000007825AFF2C8</i><i style="left:143px">00007FFCAB123CAA</i><i class="red" style="left:278px">return to ntdll.LdrInitShimEngineDynamic+37EA from ntdll.</i></div>
<div class="row m" style="top:104px"><i class="g" style="left:4px">0000007825AFF2D0</i><i style="left:143px">00007FFCAB175900</i><i class="" style="left:278px">ntdll.RtlNtdllName+74E0</i></div>
<div class="a" style="left:0;top:117px;width:734px;height:13px;background:#c0c0c0"></div>
<div class="row m" style="top:117px"><i class="" style="left:4px">0000007825AFF2D8</i><i style="left:143px">0000000000000010</i></div>
<div class="row m" style="top:130px"><i class="g" style="left:4px">0000007825AFF2E0</i><i style="left:143px">0000000000000010</i></div>
<div class="row m" style="top:143px"><i class="g" style="left:4px">0000007825AFF2E8</i><i style="left:143px">0000000000000010</i></div>
<div class="row m" style="top:156px"><i class="g" style="left:4px">0000007825AFF2F0</i><i style="left:143px">0000007825AFF3C0</i></div>
<div class="row m" style="top:169px"><i class="g" style="left:4px">0000007825AFF2F8</i><i style="left:143px">00007FFC00000004</i></div>
<div class="row m" style="top:182px"><i class="g" style="left:4px">0000007825AFF300</i><i style="left:143px">0000000000000000</i></div>
<div class="row m" style="top:195px"><i class="g" style="left:4px">0000007825AFF308</i><i style="left:143px">0000000000000000</i></div>
<div class="vl" style="left:135px;top:0;height:201px;background:#a0a0a0"></div>
<div class="vl" style="left:273px;top:0;height:201px;background:#a0a0a0"></div>
<div class="a" style="left:137px;top:93px;width:2px;height:110px;background:#0000ff"></div>
<div class="a" style="left:137px;top:93px;width:5px;height:2px;background:#0000ff"></div>
<div class="sb0" style="left:734px;top:0;width:21px;height:222px"></div>
<svg class="a" style="left:739px;top:7px" width="10" height="8" viewBox="0 0 10 8"><path d="M1 6l4-4 4 4" fill="none" stroke="#555" stroke-width="1.800"/></svg>
<svg class="a" style="left:739px;top:187px" width="10" height="8" viewBox="0 0 10 8"><path d="M1 2l4 4 4-4" fill="none" stroke="#555" stroke-width="1.800"/></svg>
<div class="th" style="left:734px;top:139px;width:20px;height:21px"></div>
<div class="sb0" style="left:0;top:201px;width:734px;height:21px"></div>
<svg class="a" style="left:6px;top:207px" width="8" height="10" viewBox="0 0 8 10"><path d="M6 1L2 5l4 4" fill="none" stroke="#555" stroke-width="1.800"/></svg>
<svg class="a" style="left:720px;top:207px" width="8" height="10" viewBox="0 0 8 10"><path d="M2 1l4 4-4 4" fill="none" stroke="#555" stroke-width="1.800"/></svg>
<div class="th" style="left:21px;top:202px;width:205px;height:20px"></div>
</div>
<!-- s_bottom -->
<div class="a ui" id="cmdl" style="left:3px;top:850px;font-size:12.500px;line-height:16px">Command:</div>
<div class="a" style="left:69px;top:846px;width:1762px;height:22px;background:#fff;border:1px solid #7a7a7a"></div>
<div class="a m" style="left:73px;top:851px;color:#8c8c8c">Commands are comma separated (like assembly instructions): mov eax, ebx</div>
<div class="a" style="left:1832px;top:846px;width:86px;height:22px;background:#e1e1e1;border:1px solid #adadad"></div>
<div class="a ui" id="dflt" style="left:1836px;top:849.5px;font-size:12.500px;line-height:16px">Default</div>
<svg class="a" style="left:1904px;top:854px" width="9" height="6" viewBox="0 0 9 6"><path d="M0.500 0.500h8L4.500 5z" fill="#000"/></svg>
<div class="a" style="left:0;top:870px;width:1920px;height:26px;background:#c0c0c0"></div>
<div class="a" style="left:0;top:896px;width:1920px;height:1px;background:#1a1a1a"></div>
<div class="a" style="left:2px;top:873px;width:76px;height:21px;background:#ffff00"></div>
<div class="a ui" style="left:2px;top:876px;width:76px;text-align:center;font-size:12px;line-height:16px;color:#ff0000"><span id="psd">Paused</span></div>
<div class="a" style="left:84px;top:873px;width:1609px;height:21px;border:1px solid #a0a0a0;border-right-color:#d8d8d8;border-bottom-color:#d8d8d8"></div>
<div class="a ui" id="bpm" style="left:88px;top:875.5px;font-size:12.500px;line-height:16px">Breakpoint at <span style="color:#0000ff;text-decoration:underline">00007FF794A526FA</span> set!</div>
<div class="a" style="left:1699px;top:873px;width:220px;height:21px;border:1px solid #a0a0a0;border-right-color:#d8d8d8;border-bottom-color:#d8d8d8"></div>
<div class="a ui" id="tw" style="left:1703px;top:877px;font-size:13.1px;line-height:16px">Time Wasted Debugging: 0:01:54:30</div>
<div class="a ui" id="wm1" style="left:1554.5px;top:799px;font-size:24.9px;line-height:28px;color:rgba(120,120,120,.48)">Activate Windows</div>
<div class="a ui" id="wm2" style="left:1554.5px;top:833px;font-size:17.95px;line-height:20px;color:rgba(120,120,120,.48)">Go to Settings to activate Windows.</div>
</body></html>
